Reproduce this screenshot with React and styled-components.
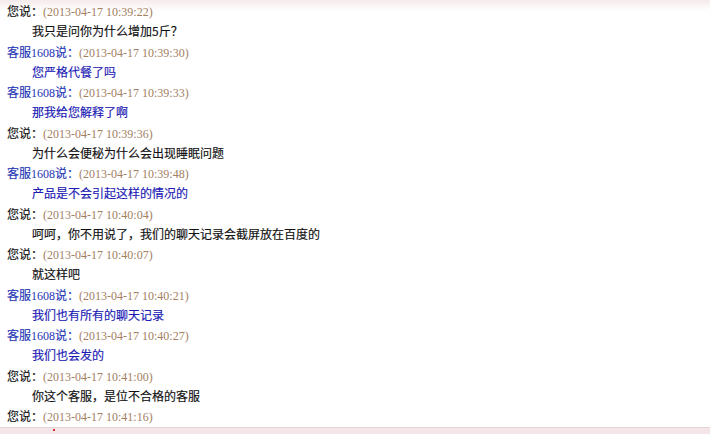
import React from 'react'
import styled, { createGlobalStyle } from 'styled-components'

const GlobalStyle = createGlobalStyle`
  html, body {
    margin: 0;
    padding: 0;
    background: #fff;
  }
`

const Page = styled.div`
  width: 710px;
  height: 434px;
  display: flex;
  flex-direction: column;
  overflow: hidden;
  background: linear-gradient(#f4eaeb 0px, #fbf7f7 6px, #ffffff 12px);
  font-family: "Noto Sans CJK SC", "Liberation Serif", serif;
  font-size: 12px;
`

const Log = styled.div`
  flex: 1;
  padding-top: 1px;
  overflow: hidden;
`

const Header = styled.div`
  height: 20.25px;
  line-height: 20.25px;
  padding-left: 7px;
  white-space: nowrap;
  -webkit-text-stroke: 0.15px currentColor;
  color: ${(p) => (p.$staff ? '#2435b4' : '#111')};
`

const Num = styled.span`
  font-family: "Liberation Serif", serif;
  -webkit-text-stroke: 0;
`

const Time = styled.span`
  font-family: "Liberation Serif", serif;
  -webkit-text-stroke: 0;
  color: #a3805f;
`

const Message = styled.div`
  height: 20.25px;
  line-height: 20.25px;
  padding-left: 32px;
  white-space: nowrap;
  -webkit-text-stroke: 0.15px currentColor;
  color: ${(p) => (p.$staff ? '#1a1ab4' : '#111')};
`

const Footer = styled.div`
  height: 6px;
  border-top: 1px solid #e4d3d5;
  background: #f4e6e8;
  display: flex;
`

const Tick = styled.span`
  width: 2px;
  height: 2px;
  margin: 1px 0 0 53px;
  background: #d0302c;
`

const messages = [
  { staff: false, time: '2013-04-17 10:39:22', text: '我只是问你为什么增加5斤？' },
  { staff: true, time: '2013-04-17 10:39:30', text: '您严格代餐了吗' },
  { staff: true, time: '2013-04-17 10:39:33', text: '那我给您解释了啊' },
  { staff: false, time: '2013-04-17 10:39:36', text: '为什么会便秘为什么会出现睡眠问题' },
  { staff: true, time: '2013-04-17 10:39:48', text: '产品是不会引起这样的情况的' },
  { staff: false, time: '2013-04-17 10:40:04', text: '呵呵，你不用说了，我们的聊天记录会截屏放在百度的' },
  { staff: false, time: '2013-04-17 10:40:07', text: '就这样吧' },
  { staff: true, time: '2013-04-17 10:40:21', text: '我们也有所有的聊天记录' },
  { staff: true, time: '2013-04-17 10:40:27', text: '我们也会发的' },
  { staff: false, time: '2013-04-17 10:41:00', text: '你这个客服，是位不合格的客服' },
  { staff: false, time: '2013-04-17 10:41:16', text: '' },
]

export default function App() {
  return (
    <>
      <GlobalStyle />
      <Page>
        <Log>
          {messages.map((m, i) => (
            <React.Fragment key={i}>
              <Header $staff={m.staff}>
                {m.staff ? (
                  <>客服<Num>1608</Num>说：</>
                ) : (
                  '您说：'
                )}
                <Time>({m.time})</Time>
              </Header>
              {m.text && <Message $staff={m.staff}>{m.text}</Message>}
            </React.Fragment>
          ))}
        </Log>
        <Footer>
          <Tick />
        </Footer>
      </Page>
    </>
  )
}
